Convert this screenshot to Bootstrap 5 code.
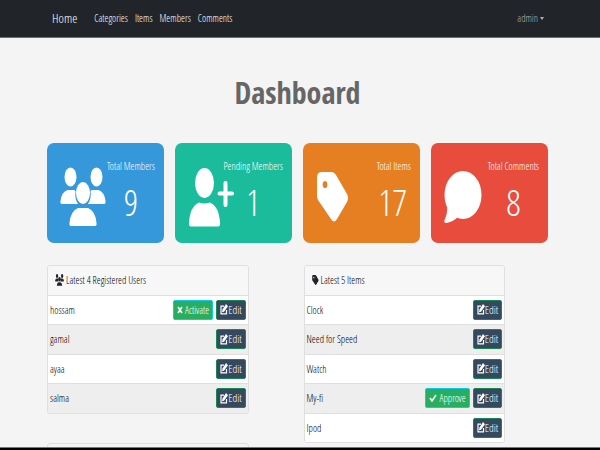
<!DOCTYPE html>
<html lang="en">
<head>
<meta charset="utf-8">
<meta name="viewport" content="width=device-width, initial-scale=1">
<title>Dashboard</title>
<link rel="stylesheet" href="https://cdn.jsdelivr.net/npm/bootstrap@5.3.0/dist/css/bootstrap.min.css">
<style>
body{background:#f4f4f4;font-family:"Open Sans Condensed Light","Roboto Condensed","Open Sans",sans-serif;font-size:10px;line-height:14px;color:#000}
.page{padding-left:47px;padding-right:52px}
.topbar{background:#212529;border-bottom:1px solid #6b6d70;min-height:38px}
.topbar a{color:#fff;text-decoration:none}
.topbar .home{font-size:13px;line-height:20px;margin:0 17px 0 5px}
.topbar .user{color:#b0b2b4;margin-right:4px}
.topbar .user::after{border-width:3px 2px 0;margin-left:2px;vertical-align:2px}
.links{gap:7px}
h1{font-family:"Open Sans Condensed","Open Sans",sans-serif;font-size:30px;line-height:46px;font-weight:700;color:#666;padding:32px 0 27px}
.tiles{--bs-gutter-x:11px}
.stat{border-radius:7px;min-height:100px;color:#fff;padding:16px 9px 0 13px}
.stat svg{height:60px;margin-top:8px;flex:none}
.stat .num{font-size:36px;line-height:44px;color:#fff;text-decoration:none;margin-top:8px}
.stat .info{white-space:nowrap}
.members{background:#3498db}.pending{background:#1abc9c}.items{background:#e67e22}.comments{background:#e74c3c}
.pending .info{margin-left:-12px}
.panels{--bs-gutter-x:12px;padding-top:22px}
.panel{border:1px solid #dfdfdf;border-radius:3px;overflow:hidden;margin-bottom:29px}
.panel h2{font-size:10px;line-height:14px;font-weight:400;background:#f7f7f7;padding:7px 7px 8px;margin:0;gap:2px}
.panel li{background:#fff;height:29px;border-top:1px solid #dfdfdf;padding:0 2px 1px;gap:3px}
.panel li:nth-child(even){background:#eee;height:30px}
.act{font-size:11px;line-height:14px;height:20px;color:#fff;text-decoration:none;border:1px solid #198754;border-radius:2px;padding:0 3px;background:#34495e}
.act:hover{color:#fff}
.act.ok{font-size:10px;background:#27ae60;border-color:#0dcaf0;gap:2px;padding:0 3px}
.strip{height:3px;background:#000;border-top:1px solid #777}
</style>
</head>
<body class="vh-100 overflow-hidden">
<svg class="d-none" aria-hidden="true">
<symbol id="users" viewBox="0 0 46 60" preserveAspectRatio="none"><ellipse cx="10.500" cy="10" rx="6" ry="9.500"/><ellipse cx="36.500" cy="10" rx="6" ry="9.500"/><path d="M2 37q-2 0-1.500-3 1-9 7-11h6q1 0 2 1-1 8 2.500 13zM44 37q2 0 1.500-3-1-9-7-11h-6q-1 0-2 1 1 8-2.500 13z"/><ellipse cx="23" cy="26" rx="7" ry="11"/><path d="M11 59q-2 0-1.500-3 1-12 8.500-15h10q7.500 3 8.500 15 .5 3-1.500 3z"/></symbol>
<symbol id="tag" viewBox="0 0 34 60" preserveAspectRatio="none"><path fill-rule="evenodd" d="M1 11q0-6 4-6h11q2 0 4 3l11 19q2 4 0 8L21 52q-3 5-6 0L2 33q-1-2-1-4zM9 14a2.400 3.600 0 1 0 .1 0z"/></symbol>
<symbol id="edit" viewBox="0 0 16 20" preserveAspectRatio="none"><path fill="none" stroke="#fff" stroke-width="2.400" d="M8 4H2v14h11v-7"/><path fill="#fff" d="M12 0l4 4-8 10-4 1 1-5z"/></symbol>
</svg>
<div class="d-flex flex-column h-100">
<nav class="topbar flex-shrink-0"><div class="page d-flex align-items-center pt-2">
<a class="home" href="#">Home</a>
<div class="links d-flex flex-grow-1"><a href="#">Categories</a><a href="#">Items</a><a href="#">Members</a><a href="#">Comments</a></div>
<a class="user dropdown-toggle" href="#">admin</a>
</div></nav>
<main class="page flex-grow-1 overflow-hidden">
<h1 class="text-center m-0">Dashboard</h1>
<div class="row tiles">
<div class="col-3"><div class="stat members d-flex justify-content-between align-items-start"><svg width="46" fill="#fff"><use href="#users"/></svg><div class="info d-flex flex-column align-items-center"><span>Total Members</span><a class="num" href="#">9</a></div></div></div>
<div class="col-3"><div class="stat pending d-flex justify-content-between align-items-start"><svg width="46" viewBox="0 0 46 60" fill="#fff"><ellipse cx="16.500" cy="16" rx="9.500" ry="15"/><path d="M3 59.500q-2.500 0-2-4 1-16 10-20 5 2 11 0 9 4 10 20 .5 4-2 4z"/><path d="M37.500 16v22M31.500 26.500h12.500" stroke="#fff" stroke-width="4" stroke-linecap="round"/></svg><div class="info d-flex flex-column align-items-center"><span>Pending Members</span><a class="num" href="#">1</a></div></div></div>
<div class="col-3"><div class="stat items d-flex justify-content-between align-items-start"><svg width="34" fill="#fff"><use href="#tag"/></svg><div class="info d-flex flex-column align-items-end"><span>Total Items</span><a class="num pe-1" href="#">17</a></div></div></div>
<div class="col-3"><div class="stat comments d-flex justify-content-between align-items-start"><svg width="38" viewBox="0 0 38 60" fill="#fff"><ellipse cx="19" cy="28" rx="18.500" ry="24"/><path d="M3 37q1 9-2 15-2 4 1 4 7-1 12-6z"/></svg><div class="info d-flex flex-column align-items-center"><span>Total Comments</span><a class="num" href="#">8</a></div></div></div>
</div>
<div class="row panels">
<div class="col-5">
<section class="panel"><h2 class="d-flex align-items-center"><svg width="9" height="12" fill="#212529"><use href="#users"/></svg>Latest 4 Registered Users</h2>
<ul class="list-unstyled m-0">
<li class="d-flex align-items-center"><span class="me-auto">hossam</span><a class="act ok d-flex align-items-center" href="#"><svg width="6" height="8" viewBox="0 0 6 8"><path d="M1 1l4 6M5 1L1 7" stroke="#fff" stroke-width="1.600"/></svg>Activate</a><a class="act d-flex align-items-center" href="#"><svg width="8" height="11"><use href="#edit"/></svg>Edit</a></li>
<li class="d-flex align-items-center"><span class="me-auto">gamal</span><a class="act d-flex align-items-center" href="#"><svg width="8" height="11"><use href="#edit"/></svg>Edit</a></li>
<li class="d-flex align-items-center"><span class="me-auto">ayaa</span><a class="act d-flex align-items-center" href="#"><svg width="8" height="11"><use href="#edit"/></svg>Edit</a></li>
<li class="d-flex align-items-center"><span class="me-auto">salma</span><a class="act d-flex align-items-center" href="#"><svg width="8" height="11"><use href="#edit"/></svg>Edit</a></li>
</ul></section>
<section class="panel pt-3"></section>
</div>
<div class="col-5 offset-1">
<section class="panel"><h2 class="d-flex align-items-center"><svg width="7" height="12" fill="#212529"><use href="#tag"/></svg>Latest 5 Items</h2>
<ul class="list-unstyled m-0">
<li class="d-flex align-items-center"><span class="me-auto">Clock</span><a class="act d-flex align-items-center" href="#"><svg width="8" height="11"><use href="#edit"/></svg>Edit</a></li>
<li class="d-flex align-items-center"><span class="me-auto">Need for Speed</span><a class="act d-flex align-items-center" href="#"><svg width="8" height="11"><use href="#edit"/></svg>Edit</a></li>
<li class="d-flex align-items-center"><span class="me-auto">Watch</span><a class="act d-flex align-items-center" href="#"><svg width="8" height="11"><use href="#edit"/></svg>Edit</a></li>
<li class="d-flex align-items-center"><span class="me-auto">My-fi</span><a class="act ok d-flex align-items-center" href="#"><svg width="8" height="8" viewBox="0 0 8 8"><path fill="none" d="M1 4l2 3 4-6" stroke="#fff" stroke-width="1.600"/></svg>Approve</a><a class="act d-flex align-items-center" href="#"><svg width="8" height="11"><use href="#edit"/></svg>Edit</a></li>
<li class="d-flex align-items-center"><span class="me-auto">Ipod</span><a class="act d-flex align-items-center" href="#"><svg width="8" height="11"><use href="#edit"/></svg>Edit</a></li>
</ul></section>
</div>
</div>
</main>
<footer class="strip flex-shrink-0"></footer>
</div>
<script src="https://cdn.jsdelivr.net/npm/bootstrap@5.3.0/dist/js/bootstrap.bundle.min.js"></script>
</body>
</html>
